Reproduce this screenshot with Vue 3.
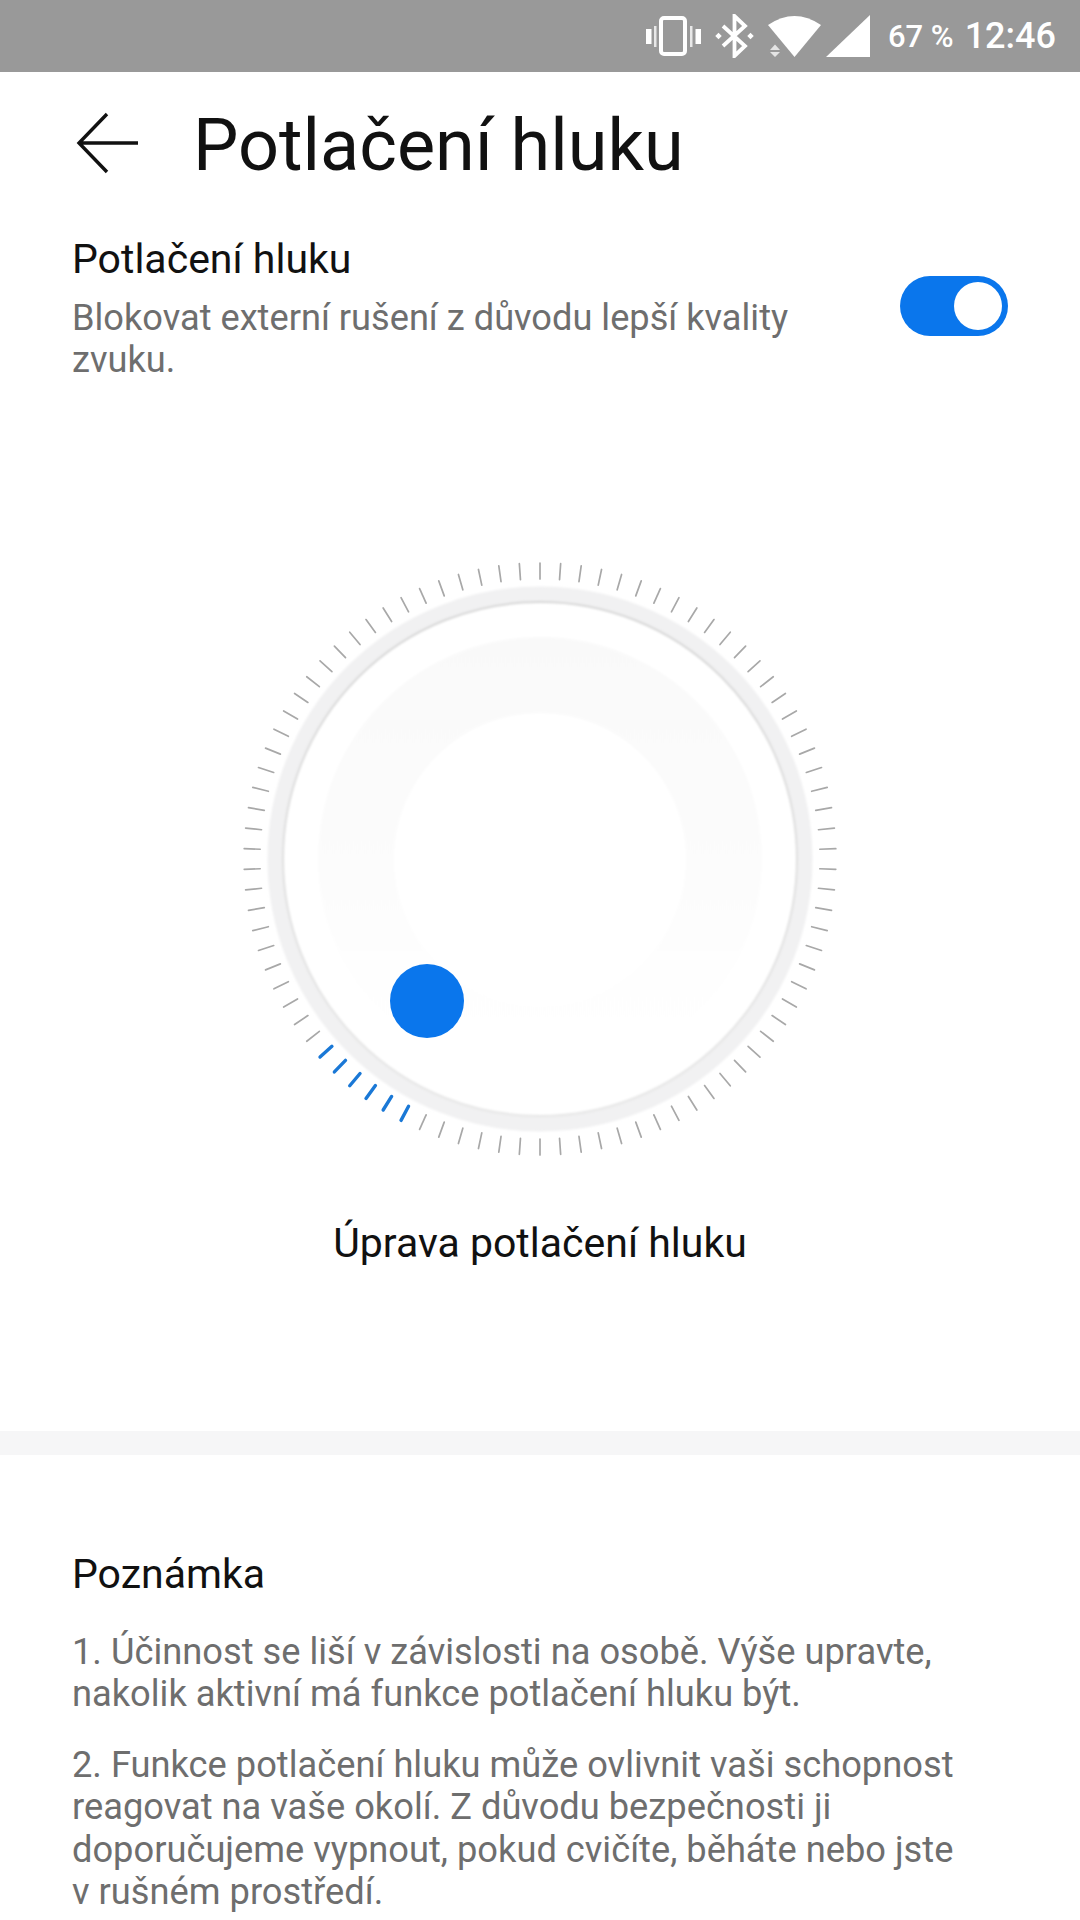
<template>
  <div class="screen">
    <!-- status bar -->
    <div class="status">
      <svg class="st-vibrate" width="55" height="40" viewBox="0 0 55 40">
        <rect x="15" y="2" width="24" height="36" rx="3" fill="none" stroke="#fff" stroke-width="4" />
        <rect x="0" y="13" width="5.5" height="15" fill="#fff" />
        <rect x="49.5" y="13" width="5.5" height="15" fill="#fff" />
        <rect x="8" y="10" width="2.5" height="21" fill="#e8e8e8" />
        <rect x="44" y="10" width="2.5" height="21" fill="#e8e8e8" />
      </svg>
      <svg class="st-bt" width="39" height="44" viewBox="0 0 39 44">
        <path d="M8 12 L30 32 L19.5 42 V2 L30 12 L8 32" fill="none" stroke="#fff" stroke-width="3.8" />
        <rect x="1.2" y="19.7" width="4.6" height="4.6" transform="rotate(45 3.5 22)" fill="#fff" />
        <rect x="33.2" y="19.7" width="4.6" height="4.6" transform="rotate(45 35.5 22)" fill="#fff" />
      </svg>
      <svg class="st-wifi" width="53" height="41" viewBox="0 0 53 41">
        <path d="M0 9 Q26.5 -9 53 9 L26.5 41 Z" fill="#fff" />
        <path d="M2 34 L7 28.5 L12 34 Z M2 36 L12 36 L7 41 Z" fill="#e4e4e4" />
      </svg>
      <svg class="st-signal" width="44" height="42" viewBox="0 0 44 42">
        <path d="M0 42 L44 0 V42 Z" fill="#fff" />
      </svg>
      <span class="st-batt">67 %</span>
      <span class="st-time">12:46</span>
    </div>

    <!-- header -->
    <div class="head">
      <svg class="back" width="64" height="62" viewBox="0 0 64 62">
        <path d="M62 31 H3 M31 2 L3 31 L31 60" fill="none" stroke="#111" stroke-width="3.4" />
      </svg>
      <h1 class="head__title">Potlačení hluku</h1>
    </div>

    <!-- switch row -->
    <div class="row">
      <div class="row__text">
        <div class="row__title">Potlačení hluku</div>
        <div class="row__desc">Blokovat externí rušení z důvodu lepší kvality zvuku.</div>
      </div>
      <div class="switch"><span class="switch__knob"></span></div>
    </div>

    <!-- dial -->
    <div class="dial">
      <svg width="600" height="600" viewBox="-300 -300 600 600">
        <defs>
          <linearGradient id="zone" x1="0" y1="0" x2="0" y2="1">
            <stop offset="0" stop-color="#f9f9f9" />
            <stop offset="0.5" stop-color="#fcfcfc" />
            <stop offset="0.75" stop-color="#fefefe" />
            <stop offset="1" stop-color="#ffffff" />
          </linearGradient>
          <linearGradient id="edge" x1="0" y1="0" x2="0" y2="1">
            <stop offset="0" stop-color="#d6d6d6" />
            <stop offset="1" stop-color="#e6e6e6" />
          </linearGradient>
          <filter id="soft" x="-5%" y="-5%" width="110%" height="110%">
            <feGaussianBlur stdDeviation="0.9" />
          </filter>
        </defs>
        <g filter="url(#soft)">
          <circle r="265" fill="none" stroke="#f1f1f2" stroke-width="15" />
          <circle r="257" fill="#fff" stroke="url(#edge)" stroke-width="2" />
          <circle r="222" fill="url(#zone)" />
          <circle r="146" fill="#fff" />
        </g>
        <line
          v-for="t in ticks"
          :key="t.deg"
          :x1="t.x1"
          :y1="t.y1"
          :x2="t.x2"
          :y2="t.y2"
          :stroke="t.on ? '#1a78d6' : '#a8a8a8'"
          :stroke-width="t.on ? 3.4 : 1.7"
          stroke-linecap="round"
        />
        <circle cx="-113" cy="142" r="37" fill="#0a76ec" />
      </svg>
    </div>

    <div class="caption">Úprava potlačení hluku</div>

    <div class="divider"></div>

    <!-- note -->
    <div class="note">
      <div class="note__title">Poznámka</div>
      <p class="note__p">1. Účinnost se liší v závislosti na osobě. Výše upravte, nakolik aktivní má funkce potlačení hluku být.</p>
      <p class="note__p">2. Funkce potlačení hluku může ovlivnit vaši schopnost reagovat na vaše okolí. Z důvodu bezpečnosti ji doporučujeme vypnout, pokud cvičíte, běháte nebo jste v&nbsp;rušném prostředí.</p>
    </div>
  </div>
</template>

<script setup>
// 90 ticks, one every 4 degrees, measured from straight down going clockwise
const ticks = []
for (let deg = 0; deg < 360; deg += 4) {
  const a = (deg * Math.PI) / 180
  const on = deg >= 28 && deg <= 48
  const r1 = 280
  const r2 = 296
  ticks.push({
    deg,
    on,
    x1: -Math.sin(a) * r1,
    y1: Math.cos(a) * r1,
    x2: -Math.sin(a) * r2,
    y2: Math.cos(a) * r2,
  })
}
</script>

<style>
html, body { background: #fff; }
</style>

<style scoped>
.screen {
  width: 1080px;
  height: 1920px;
  overflow: hidden;
  background: #fff;
  font-family: Roboto, "Liberation Sans", sans-serif;
  color: #111;
}

.status {
  height: 72px;
  background: #999;
  display: flex;
  align-items: center;
  justify-content: flex-end;
  padding-right: 24px;
  color: #fff;
}
.st-vibrate { margin-right: 14px; }
.st-bt { margin-right: 14px; }
.st-wifi { margin-right: 5px; }
.st-signal { margin-right: 18px; }
.st-batt { font-size: 31px; font-weight: 500; margin-right: 11px; }
.st-time { font-size: 36px; font-weight: 500; }

.head {
  display: flex;
  align-items: center;
  height: 142px;
  padding-left: 76px;
}
.back { margin-right: 53px; }
.head__title {
  margin: 6px 0 0;
  font-size: 72px;
  font-weight: 400;
  line-height: 1;
}

.row {
  display: flex;
  align-items: center;
  justify-content: space-between;
  padding: 20px 72px 0 72px;
}
.row__text { width: 760px; }
.row__title { font-size: 41px; line-height: 50px; }
.row__desc {
  margin-top: 13px;
  font-size: 36.2px;
  line-height: 42px;
  color: #6e6e6e;
}
.switch {
  width: 108px;
  height: 60px;
  border-radius: 30px;
  background: #0a76ec;
  display: flex;
  align-items: center;
  justify-content: flex-end;
  padding-right: 6px;
  box-sizing: border-box;
  margin-top: -3px;
}
.switch__knob {
  width: 48px;
  height: 48px;
  border-radius: 50%;
  background: #fff;
}

.dial {
  display: flex;
  justify-content: center;
  margin-top: 178px;
}
.dial svg { display: block; }

.caption {
  margin-top: 59px;
  text-align: center;
  font-size: 41px;
  line-height: 50px;
}

.divider {
  height: 24px;
  margin-top: 163px;
  background: #f6f6f7;
}

.note { padding: 94px 72px 0 72px; }
.note__title { font-size: 41px; line-height: 50px; }
.note__p {
  margin: 28px 0 0;
  font-size: 36.25px;
  line-height: 42.4px;
  color: #6e6e6e;
}
.note__title + .note__p { margin-top: 32px; }
</style>
